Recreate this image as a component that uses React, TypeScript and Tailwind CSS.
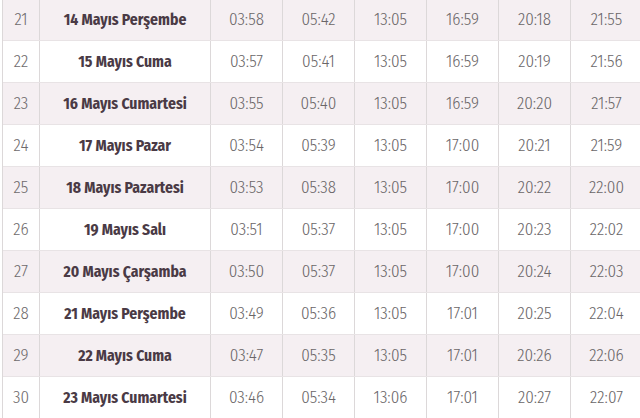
const rows: [number, string, string[]][] = [
  [21, '14 Mayıs Perşembe', ['03:58', '05:42', '13:05', '16:59', '20:18', '21:55']],
  [22, '15 Mayıs Cuma', ['03:57', '05:41', '13:05', '16:59', '20:19', '21:56']],
  [23, '16 Mayıs Cumartesi', ['03:55', '05:40', '13:05', '16:59', '20:20', '21:57']],
  [24, '17 Mayıs Pazar', ['03:54', '05:39', '13:05', '17:00', '20:21', '21:59']],
  [25, '18 Mayıs Pazartesi', ['03:53', '05:38', '13:05', '17:00', '20:22', '22:00']],
  [26, '19 Mayıs Salı', ['03:51', '05:37', '13:05', '17:00', '20:23', '22:02']],
  [27, '20 Mayıs Çarşamba', ['03:50', '05:37', '13:05', '17:00', '20:24', '22:03']],
  [28, '21 Mayıs Perşembe', ['03:49', '05:36', '13:05', '17:01', '20:25', '22:04']],
  [29, '22 Mayıs Cuma', ['03:47', '05:35', '13:05', '17:01', '20:26', '22:06']],
  [30, '23 Mayıs Cumartesi', ['03:46', '05:34', '13:06', '17:01', '20:27', '22:07']],
]

export default function App() {
  return (
    <div className="w-[640px] h-[418px] overflow-hidden bg-white font-['Fira_Sans_Condensed','Liberation_Sans_Narrow','DejaVu_Sans_Condensed','Roboto_Condensed',Roboto,sans-serif]">
      <div className="ml-[2px] -mt-px w-[642px] border-l border-[#dcd8d9]">
        {rows.map(([day, date, times], i) => (
          <div
            key={day}
            className={`flex h-[42px] items-center border-b border-[#e8e3e5] ${i % 2 === 0 ? 'bg-[#f5eff2]' : 'bg-white'}`}
          >
            <div className="flex h-full w-[37px] items-center justify-center border-r border-[#dcd8d9] text-[17px] font-light text-[#6e6a6c]">
              {day}
            </div>
            <div className="flex h-full w-[171px] items-center justify-center border-r border-[#dcd8d9] text-[15.6px] font-bold text-[#4a3a45]">
              {date}
            </div>
            {times.map((t, j) => (
              <div
                key={j}
                className="flex h-full w-[72px] items-center justify-center border-r border-[#dcd8d9] text-[17px] font-light text-[#6a6668]"
              >
                {t}
              </div>
            ))}
          </div>
        ))}
      </div>
    </div>
  )
}
